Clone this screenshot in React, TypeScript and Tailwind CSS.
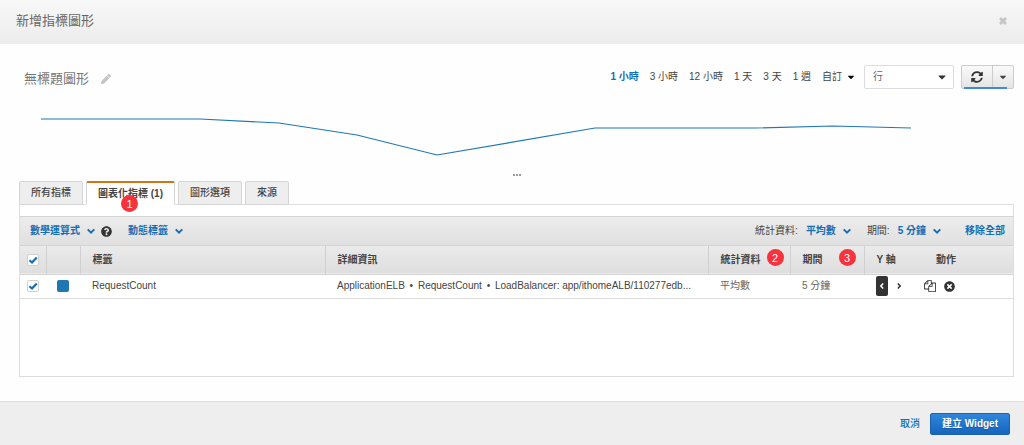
import { useState } from 'react';
import { FaCaretDown, FaPen, FaQuestionCircle, FaSyncAlt, FaTimesCircle } from 'react-icons/fa';
import clsx from 'clsx';

const ranges = ['1 小時', '3 小時', '12 小時', '1 天', '3 天', '1 週'];
const tabs = ['所有指標', '圖表化指標 (1)', '圖形選項', '來源'];

const points = [
  [22, 19], [181, 19], [260, 23], [338, 35], [418, 55],
  [576, 28], [736, 28], [814, 26], [892, 28],
];

const Badge = ({ value, className }: { value: number; className: string }) => (
  <span
    className={clsx(
      'absolute z-10 flex h-[17px] w-[17px] items-center justify-center rounded-full bg-[#f8333c] text-[11px] leading-4 font-normal text-white',
      className
    )}
  >
    {value}
  </span>
);

const CheckBox = ({ label }: { label: string }) => {
  const [checked, setChecked] = useState(true);

  return (
    <label className="relative block h-3 w-3">
      <input
        type="checkbox"
        aria-label={label}
        checked={checked}
        onChange={(e) => setChecked(e.target.checked)}
        className="block h-3 w-3 appearance-none rounded-xs border border-[#d0d0d0] bg-white"
      />
      {checked && (
        <svg viewBox="0 0 12 12" className="pointer-events-none absolute inset-0 h-3 w-3">
          <path d="M2.4 6.2 L5 8.5 L9.8 3.4" fill="none" stroke="#146eb4" strokeWidth="2.2" />
        </svg>
      )}
    </label>
  );
};

const Chevron = ({ className }: { className: string }) => (
  <svg viewBox="0 0 8 8" fill="none" stroke="currentColor" strokeWidth="2" className={className}>
    <path d="M0.7 2.4 L4 5.6 L7.3 2.4" />
  </svg>
);

const CopyIcon = () => (
  <svg viewBox="0 0 1792 1792" fill="currentColor" className="h-3 w-3">
    <path d="M1696 384q40 0 68 28t28 68v1216q0 40-28 68t-68 28h-960q-40 0-68-28t-28-68v-288h-544q-40 0-68-28t-28-68v-672q0-40 20-88t48-76l408-408q28-28 76-48t88-20h416q40 0 68 28t28 68v328q68-40 128-40h416zm-544 213l-299 299h299v-299zm-640-384l-299 299h299v-299zm196 647l316-316v-416h-384v416q0 40-28 68t-68 28h-416v640h512v-256q0-40 20-88t48-76zm956 804v-1152h-384v416q0 40-28 68t-68 28h-416v640h896z" />
  </svg>
);

const MenuButton = ({ label }: { label: string }) => (
  <button className="flex items-center gap-[7px] font-bold text-[#146eb4]">
    {label}
    <Chevron className="h-2 w-2" />
  </button>
);

const App = () => {
  const [activeRange, setActiveRange] = useState(ranges[0]);
  const [activeTab, setActiveTab] = useState(tabs[1]);

  return (
    <div className="flex min-h-screen flex-col bg-[#fefefe] font-['Liberation_Sans','Noto_Sans_CJK_TC',sans-serif] text-[10px] leading-4 text-[#444]">
      <header className="flex h-11 items-center justify-between bg-linear-to-b from-[#f8f8f8] to-[#ececec] px-4 pb-[3px]">
        <h1 className="text-[13px] leading-5 text-[#666]">新增指標圖形</h1>
        <button aria-label="關閉" className="text-[#c4c4c4]">
          <svg viewBox="0 0 10 10" fill="none" stroke="currentColor" strokeWidth="2.6" className="h-2.5 w-2.5">
            <path d="M2 2 L8 8 M8 2 L2 8" />
          </svg>
        </button>
      </header>

      <main className="flex flex-1 flex-col pr-2.5 pb-6 pl-[19px]">
        <div className="mt-[19px] flex h-7 items-center justify-between pl-[5px]">
          <div className="flex items-center gap-3 pt-1">
            <h2 className="text-[13px] leading-5 text-[#777]">無標題圖形</h2>
            <button aria-label="編輯標題" className="text-[#c4c4c4]">
              <FaPen className="h-2.5 w-2.5" />
            </button>
          </div>

          <div className="flex items-center">
            <div className="flex items-center gap-[11px]">
              {ranges.map((range) => (
                <button
                  key={range}
                  onClick={() => setActiveRange(range)}
                  className={range === activeRange ? 'font-bold text-[#146eb4]' : ''}
                >
                  {range}
                </button>
              ))}
              <button className="flex items-center gap-1">
                自訂
                <FaCaretDown className="h-2.5 w-2.5 text-black" />
              </button>
            </div>

            <div className="relative ml-2">
              <select
                aria-label="圖形類型"
                className="block h-6 w-[90px] appearance-none rounded-xs border border-[#ddd] bg-white px-2 text-[10px] text-[#666]"
              >
                <option>行</option>
              </select>
              <FaCaretDown className="pointer-events-none absolute top-1.5 right-1.5 h-3 w-3 text-[#333]" />
            </div>

            <div className="relative ml-[7px] flex h-6 rounded-xs border border-[#ccc] bg-linear-to-b from-[#fafafa] to-[#e4e4e4]">
              <button aria-label="重新整理" className="flex w-[31px] items-center justify-center border-r border-[#ccc] text-[#333]">
                <FaSyncAlt className="h-3 w-3" />
              </button>
              <button aria-label="重新整理選項" className="flex w-5 items-center justify-center text-[#444]">
                <FaCaretDown className="h-2.5 w-2.5" />
              </button>
              <span className="absolute right-1.5 -bottom-px left-0.5 h-0.5 bg-[#3f8ad8]" />
            </div>
          </div>
        </div>

        <svg viewBox="0 0 995 70" preserveAspectRatio="none" className="mt-[9px] h-[70px] w-full" role="img" aria-label="RequestCount">
          <polyline
            points={points.map((p) => p.join(',')).join(' ')}
            fill="none"
            stroke="#1f77b4"
            strokeWidth="1.2"
            vectorEffect="non-scaling-stroke"
          />
        </svg>

        <div className="flex h-[11px] items-start justify-center gap-px pt-1">
          <span className="h-0.5 w-0.5 bg-[#999]" />
          <span className="h-0.5 w-0.5 bg-[#999]" />
          <span className="h-0.5 w-0.5 bg-[#999]" />
        </div>

        <div className="relative z-10 -mb-px flex gap-[3px]">
          {tabs.map((tab) => (
            <button
              key={tab}
              onClick={() => setActiveTab(tab)}
              className={clsx(
                'relative h-6 rounded-t-xs border px-[11px]',
                tab === activeTab
                  ? 'border-t-2 border-[#d5d5d5] border-t-[#d17519] border-b-white bg-white font-bold'
                  : 'border-[#d5d5d5] bg-[#eee] font-medium'
              )}
            >
              {tab}
              {tab === tabs[1] && <Badge value={1} className="top-3 left-[34px]" />}
            </button>
          ))}
        </div>

        <section className="flex-1 border border-[#ddd] bg-white pt-[11px]">
          <div className="flex h-[30px] items-center justify-between border-y border-[#d4d4d4] bg-linear-to-b from-[#ececec] to-[#e0e0e0] pr-2 pl-2.5">
            <div className="flex items-center">
              <MenuButton label="數學運算式" />
              <button aria-label="說明" className="mr-4 ml-1.5 text-[#333]">
                <FaQuestionCircle className="h-[11px] w-[11px]" />
              </button>
              <MenuButton label="動態標籤" />
            </div>
            <div className="flex items-center">
              <span className="mr-2">統計資料:</span>
              <MenuButton label="平均數" />
              <span className="mr-2 ml-4">期間:</span>
              <MenuButton label="5 分鐘" />
              <button className="ml-6 font-bold text-[#146eb4]">移除全部</button>
            </div>
          </div>

          <table className="w-full table-fixed border-collapse text-left">
            <colgroup>
              <col className="w-[26px]" />
              <col className="w-[34px]" />
              <col className="w-[245px]" />
              <col />
              <col className="w-[82px]" />
              <col className="w-[74px]" />
              <col className="w-[60px]" />
              <col className="w-[89px]" />
            </colgroup>
            <thead>
              <tr className="h-7 border-b border-[#d4d4d4] bg-linear-to-b from-[#ebebeb] to-[#dedede]">
                <th className="border-r border-[#d0d0d0] pl-[7px]"><CheckBox label="選取全部" /></th>
                <th className="border-r border-[#d0d0d0]" />
                <th className="border-r border-[#d0d0d0] px-3">標籤</th>
                <th className="border-r border-[#d0d0d0] px-3">詳細資訊</th>
                <th className="relative border-r border-[#d0d0d0] px-3">
                  統計資料
                  <Badge value={2} className="top-[3px] right-1.5" />
                </th>
                <th className="relative border-r border-[#d0d0d0] px-3">
                  期間
                  <Badge value={3} className="top-[3px] right-2" />
                </th>
                <th className="px-3">Y 軸</th>
                <th className="px-3">動作</th>
              </tr>
            </thead>
            <tbody>
              <tr className="h-6 border-b border-[#ddd]">
                <td className="pl-[7px]"><CheckBox label="選取 RequestCount" /></td>
                <td className="pl-[11px]"><span className="block h-3 w-3 rounded-xs bg-[#1f77b4]" /></td>
                <td className="px-3">RequestCount</td>
                <td className="pl-3 whitespace-nowrap">
                  ApplicationELB <span className="mx-0.5">•</span> RequestCount <span className="mx-0.5">•</span> LoadBalancer: app/ithomeALB/110277edb...
                </td>
                <td className="px-3 text-[#666]">平均數</td>
                <td className="px-3 text-[#666]">5 分鐘</td>
                <td className="pl-3">
                  <div className="flex items-center gap-1.5">
                    <button aria-label="左 Y 軸" className="flex h-5 w-3 items-center justify-center rounded-xs bg-[#333] text-white">
                      <Chevron className="h-1.5 w-1.5 rotate-90" />
                    </button>
                    <button aria-label="右 Y 軸" className="px-0.5 text-[#333]">
                      <Chevron className="h-1.5 w-1.5 -rotate-90" />
                    </button>
                  </div>
                </td>
                <td>
                  <div className="flex items-center gap-2 text-[#333]">
                    <button aria-label="複製"><CopyIcon /></button>
                    <button aria-label="移除"><FaTimesCircle className="h-[11px] w-[11px]" /></button>
                  </div>
                </td>
              </tr>
            </tbody>
          </table>
        </section>
      </main>

      <footer className="flex h-11 items-center justify-end gap-2.5 border-t border-[#ddd] bg-[#eee] pr-3.5">
        <button className="font-medium text-[#146eb4]">取消</button>
        <button className="h-[22px] rounded-xs border border-[#1a62b0] bg-linear-to-b from-[#2f86dc] to-[#1664bd] px-[11px] font-bold text-white text-shadow-xs">
          建立 Widget
        </button>
      </footer>
    </div>
  );
};

export default App;
